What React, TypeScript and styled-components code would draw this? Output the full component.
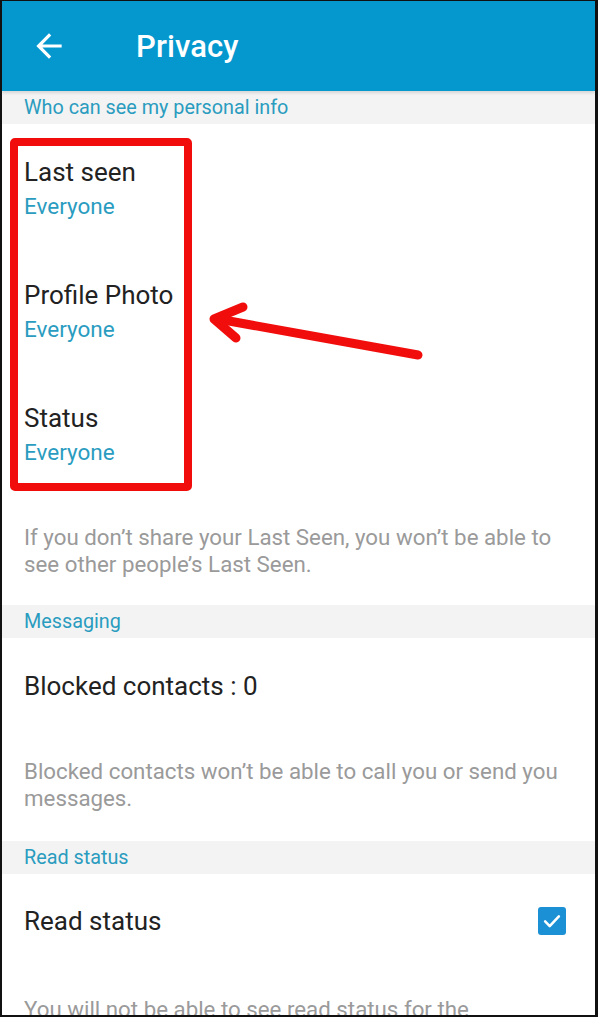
import styled, { createGlobalStyle } from "styled-components";

const GlobalStyle = createGlobalStyle`
  html, body {
    margin: 0;
    padding: 0;
    background: #000;
  }
  body {
    font-family: Roboto, "Noto Sans", "Liberation Sans", sans-serif;
  }
`;

const Frame = styled.div`
  position: relative;
  box-sizing: border-box;
  width: 598px;
  height: 1017px;
  overflow: hidden;
  border-style: solid;
  border-color: #111;
  border-width: 1px 3px 2px 2px;
  background: #fff;
`;

const Header = styled.header`
  height: 90px;
  background: #0598cf;
  display: flex;
  align-items: center;
  color: #fff;
  box-shadow: 0 2px 3px rgba(0, 0, 0, 0.12);
  position: relative;
  z-index: 1;
`;

const BackButton = styled.div`
  width: 40px;
  height: 40px;
  margin-left: 27px;
  display: flex;
  align-items: center;
  justify-content: center;
`;

const Title = styled.h1`
  margin: 0 0 0 67px;
  font-size: 31px;
  font-weight: 500;
  letter-spacing: 0.1px;
`;

const SectionHeader = styled.div`
  background: #f3f3f3;
  height: 33px;
  display: flex;
  align-items: center;
  padding: 0 22px;
  font-size: 19.8px;
  color: #2a9cbf;
`;

const Row = styled.div<{ $top: number; $bottom: number }>`
  display: flex;
  align-items: center;
  justify-content: space-between;
  padding: ${(p) => p.$top}px 29px ${(p) => p.$bottom}px 22px;
`;

const RowText = styled.div`
  display: flex;
  flex-direction: column;
  gap: 6px;
`;

const RowTitle = styled.div`
  font-size: 26px;
  line-height: 30px;
  color: #222;
`;

const RowValue = styled.div`
  font-size: 22.5px;
  line-height: 26px;
  color: #2a9cbf;
`;

const Info = styled.p<{ $top: number; $bottom: number }>`
  margin: 0;
  padding: ${(p) => p.$top}px 16px ${(p) => p.$bottom}px 22px;
  font-size: 22.3px;
  line-height: 27px;
  color: #9a9a9a;
`;

const Checkbox = styled.div`
  width: 28px;
  height: 28px;
  border-radius: 3px;
  background: #1b90d4;
  display: flex;
  align-items: center;
  justify-content: center;
`;

const HighlightBox = styled.div`
  position: absolute;
  left: 8px;
  top: 137px;
  width: 166px;
  height: 337px;
  border: 8px solid #f20d0d;
  border-radius: 5px;
  pointer-events: none;
`;

const ArrowMark = styled.svg`
  position: absolute;
  left: 0;
  top: 0;
  pointer-events: none;
`;

const settings = [
  { title: "Last seen", value: "Everyone" },
  { title: "Profile Photo", value: "Everyone" },
  { title: "Status", value: "Everyone" },
];

export default function App() {
  return (
    <>
      <GlobalStyle />
      <Frame>
        <Header>
          <BackButton>
            <svg width="38" height="38" viewBox="0 0 24 24" fill="#fff">
              <path d="M20 11H7.83l5.59-5.59L12 4l-8 8 8 8 1.41-1.41L7.83 13H20v-2z" />
            </svg>
          </BackButton>
          <Title>Privacy</Title>
        </Header>

        <SectionHeader>Who can see my personal info</SectionHeader>
        {settings.map((s, i) => (
          <Row key={s.title} $top={i === 0 ? 33 : 32} $bottom={29}>
            <RowText>
              <RowTitle>{s.title}</RowTitle>
              <RowValue>{s.value}</RowValue>
            </RowText>
          </Row>
        ))}
        <Info $top={30} $bottom={27}>
          If you don’t share your Last Seen, you won’t be able to see other
          people’s Last Seen.
        </Info>

        <SectionHeader>Messaging</SectionHeader>
        <Row $top={33} $bottom={27}>
          <RowTitle>Blocked contacts : 0</RowTitle>
        </Row>
        <Info $top={30} $bottom={29}>
          Blocked contacts won’t be able to call you or send you messages.
        </Info>

        <SectionHeader>Read status</SectionHeader>
        <Row $top={32} $bottom={28}>
          <RowTitle>Read status</RowTitle>
          <Checkbox>
            <svg width="22" height="22" viewBox="0 0 24 24" fill="none">
              <path
                d="M4.5 12.5l5 5 10-10.5"
                stroke="#fff"
                strokeWidth="2.8"
                strokeLinecap="round"
                strokeLinejoin="round"
              />
            </svg>
          </Checkbox>
        </Row>
        <Info $top={32} $bottom={0}>
          You will not be able to see read status for the
          <br />
          messages you send if you turn this off.
        </Info>

        <HighlightBox />
        <ArrowMark width="598" height="1017" viewBox="0 0 598 1017">
          <g
            stroke="#f20d0d"
            strokeWidth="9"
            strokeLinecap="round"
            strokeLinejoin="round"
            fill="none"
          >
            <path d="M416 354 L216 318" />
            <path d="M241 306 L212 318 L234 337" />
          </g>
        </ArrowMark>
      </Frame>
    </>
  );
}
